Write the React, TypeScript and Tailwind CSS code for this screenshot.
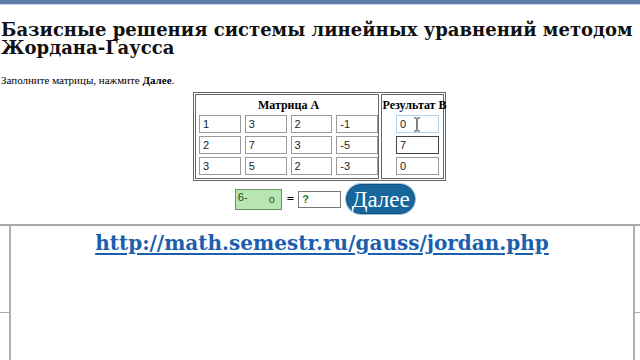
import React from 'react'

const serif = { fontFamily: '"Liberation Serif", "Times New Roman", serif' }
const wideSerif = { fontFamily: '"DejaVu Serif", "Liberation Serif", serif' }
const sans = { fontFamily: '"Liberation Sans", Arial, sans-serif' }

const matrixA = [
  ['1', '3', '2', '-1'],
  ['2', '7', '3', '-5'],
  ['3', '5', '2', '-3'],
]
const resultB = ['0', '7', '0']

function Cell({ value, className = '' }: { value: string; className?: string }) {
  return (
    <div
      className={`h-[18px] flex items-center pl-[3px] text-[11px] text-[#222] bg-white border ${className}`}
      style={sans}
    >
      {value}
    </div>
  )
}

export default function App() {
  return (
    <div className="w-[640px] h-[360px] bg-white overflow-hidden flex flex-col text-black" style={serif}>
      <div className="h-[4px] bg-[#5b7bab]" />
      <div className="h-[1px] bg-[#c9d7ea]" />

      <h1 className="mt-[16px] text-[18px] leading-[18px] font-bold text-[#111] pl-[1px]" style={wideSerif}>
        Базисные решения системы линейных уравнений методом Жордана-Гаусса
      </h1>

      <p className="mt-[16px] text-[11px] leading-[14px] pl-[1px]">
        Заполните матрицы, нажмите <b>Далее</b>.
      </p>

      <div className="mt-[5px] flex justify-center">
        <div className="ml-[-1px] flex gap-[2px] border border-[#666] p-[1px]">
          <div className="w-[184px] border border-[#666] pl-[3px] pb-[3px] flex flex-col">
            <div className="text-[12px] leading-[20px] font-bold text-center">Матрица А</div>
            <div className="flex flex-col gap-[3px]">
              {matrixA.map((row, i) => (
                <div key={i} className="flex gap-[4px]">
                  {row.map((v, j) => (
                    <Cell key={j} value={v} className="w-[42px] border-[#9a9a9a]" />
                  ))}
                </div>
              ))}
            </div>
          </div>
          <div className="w-[63px] border border-[#666] pb-[3px] flex flex-col items-center">
            <div className="text-[12px] leading-[20px] font-bold whitespace-nowrap -mr-[4px]">Результат В</div>
            <div className="flex flex-col gap-[3px] ml-[10px] relative">
              {resultB.map((v, i) => (
                <Cell
                  key={i}
                  value={v}
                  className={`w-[43px] ${i === 0 ? 'border-[#b5d3ea]' : i === 1 ? 'border-[#444]' : 'border-[#9a9a9a]'}`}
                />
              ))}
              <svg className="absolute left-[17px] top-[2px]" width="8" height="15" viewBox="0 0 8 15">
                <path d="M1 1h2.5M4.5 1H7M4 1.5v12M1 14h2.5M4.5 14H7" stroke="#333" strokeWidth="1.2" fill="none" />
              </svg>
            </div>
          </div>
        </div>
      </div>

      <div className="mt-[3px] flex justify-center items-center">
        <div className="ml-[10px] flex items-center">
          <div className="w-[47px] h-[21px] bg-[#b8e6b0] border border-[#6f8f6a] flex items-center justify-between px-[2px] text-[11px] text-[#2a4a2a]" style={sans}>
            <span className="-mt-[4px]">6-</span>
            <span className="mr-[4px]">o</span>
          </div>
          <span className="ml-[5px] text-[13px] font-bold">=</span>
          <div className="ml-[4px] w-[43px] h-[17px] border border-[#777] bg-white flex items-center pl-[3px] text-[11px] font-bold text-[#2a7a2a]" style={sans}>
            ?
          </div>
          <div className="ml-[5px] h-[30px] w-[69px] rounded-full bg-[#17679c] border border-[#0e4f7c] shadow-[0_0_0_1px_#9fc4de] flex items-center justify-center text-white text-[23px] leading-none">
            Далее
          </div>
        </div>
      </div>

      <div className="mt-[10px] flex-1 flex flex-col">
        <div className="h-[2px] bg-[#a9a9a9]" />
        <div className="flex-1 flex">
          <div className="w-[9px] flex flex-col">
            <div className="h-[86px]" />
            <div className="h-[1px] bg-[#aaa]" />
          </div>
          <div className="flex-1 border-l-2 border-r-2 border-[#b0b0b0] flex flex-col items-center">
            <a className="mt-[5px] text-[20px] leading-[24px] font-bold text-[#1b5fae] underline decoration-[1.5px] underline-offset-[3px]" style={wideSerif}>
              http://math.semestr.ru/gauss/jordan.php
            </a>
          </div>
          <div className="w-[5px] flex flex-col">
            <div className="h-[86px]" />
            <div className="h-[1px] bg-[#aaa]" />
          </div>
        </div>
      </div>
    </div>
  )
}
